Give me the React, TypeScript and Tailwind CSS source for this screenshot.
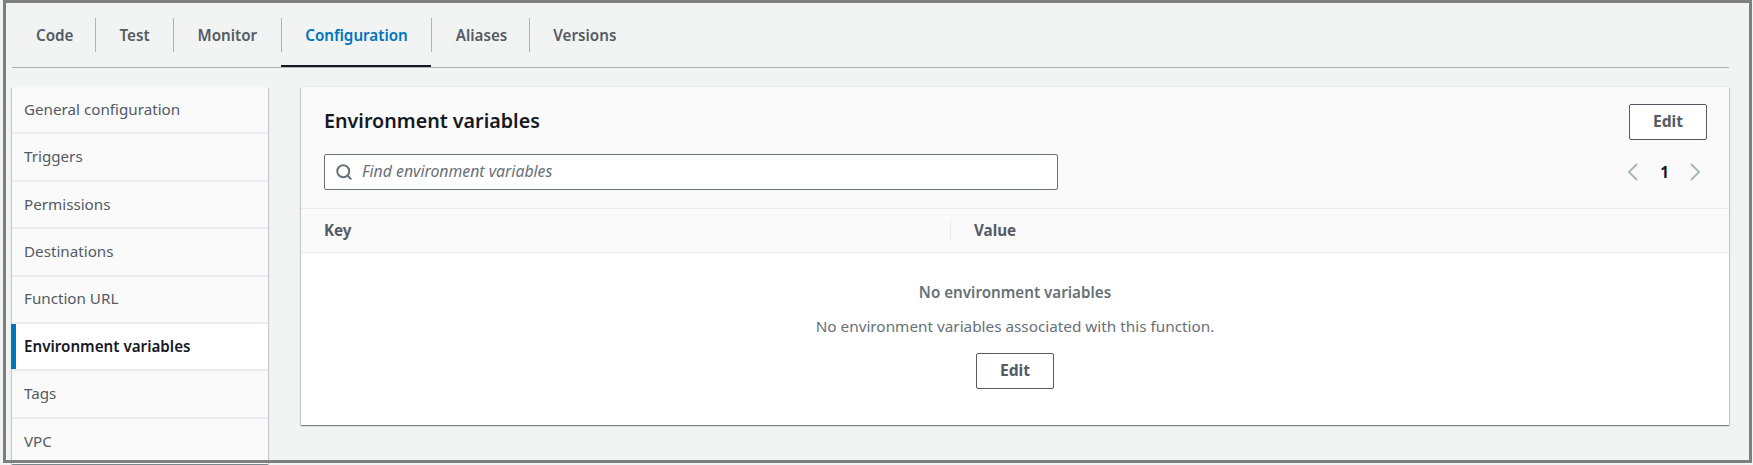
import React from "react";
import { Search } from "lucide-react";

const tabs = ["Code", "Test", "Monitor", "Configuration", "Aliases", "Versions"];
const nav = ["General configuration", "Triggers", "Permissions", "Destinations", "Function URL", "Environment variables", "Tags", "VPC"];

function EditButton() {
  return (
    <button className="w-[78px] h-[36px] bg-white border border-[#545b64] rounded-[2px] text-[#545b64] font-bold text-[15.65px] flex items-center justify-center">
      Edit
    </button>
  );
}

export default function App() {
  return (
    <div className="relative w-[1753px] h-[465px] overflow-hidden bg-[#f2f3f3] font-['Noto_Sans',sans-serif] text-[15.2px] text-[#545b64]">
      <div className="ml-[12px] mr-[24px] flex border-b border-[#aab7b8] h-[68px]">
        {tabs.map((t, i) => {
          const active = t === "Configuration";
          return (
            <div key={t} className={`pt-[18px] h-[67px] border-b-2 ${active ? "border-[#16191f]" : "border-transparent"}`}>
              <div className={`h-[34px] flex items-center font-semibold pt-[1px] ${i > 0 ? "border-l border-[#aab7b8] pl-[23.5px]" : "pl-[24px]"} ${i === 0 ? "pr-[21.5px]" : t === "Aliases" ? "pr-[21.5px]" : "pr-[23.5px]"} ${active ? "text-[#0073bb]" : ""}`}>
                {t}
              </div>
            </div>
          );
        })}
      </div>

      <div className="flex gap-[33px] ml-[12px] mr-[24px] pt-[19px]">
        <div className="w-[256px] shrink-0 flex flex-col gap-[2px] bg-[#eaeded] shadow-[0_1px_1px_0_rgba(0,28,36,0.3),1px_1px_1px_0_rgba(0,28,36,0.15),-1px_1px_1px_0_rgba(0,28,36,0.15)]">
          {nav.map((n) => {
            const active = n === "Environment variables";
            return (
              <div
                key={n}
                className={`h-[45.4px] shrink-0 flex items-center pb-[1px] ${active ? "bg-white font-semibold text-[#16191f] border-l-[5px] border-[#0073bb] pl-[8px] -ml-px" : "bg-[#fafafa] pl-[12px]"}`}
              >
                {n}
              </div>
            );
          })}
        </div>

        <div className="flex-1 h-[338px] flex flex-col bg-white shadow-[0_1px_1px_0_rgba(0,28,36,0.3),1px_1px_1px_0_rgba(0,28,36,0.15),-1px_1px_1px_0_rgba(0,28,36,0.15),0_-1px_1px_0_rgba(0,28,36,0.04)]">
          <div className="bg-[#fafafa] border-b border-[#eaeded] h-[122px] pt-[17px] px-[23px] flex flex-col">
            <div className="flex justify-between items-start h-[50px]">
              <h2 className="font-semibold text-[19.7px] leading-[34px] text-[#16191f]">Environment variables</h2>
              <div className="mr-[-1px]"><EditButton /></div>
            </div>
            <div className="flex justify-between items-center">
              <div className="w-[734px] h-[36px] bg-white border border-[#687078] rounded-[2px] flex items-center pl-[10px] gap-[9px]">
                <Search size={18} strokeWidth={2.6} className="text-[#687078]" />
                <span className="italic text-[#687078] text-[15.8px]">Find environment variables</span>
              </div>
              <div className="flex items-center mr-[5px] gap-[20px]">
                <svg className="mr-[1px]" width="11" height="18" viewBox="0 0 11 18" fill="none" stroke="#aab7b8" strokeWidth="2"><path d="M10 1 L2 9 L10 17" /></svg>
                <span className="font-bold text-[#16191f] w-[11px] text-center">1</span>
                <svg width="11" height="18" viewBox="0 0 11 18" fill="none" stroke="#aab7b8" strokeWidth="2"><path d="M1 1 L9 9 L1 17" /></svg>
              </div>
            </div>
          </div>
          <div className="bg-[#fafafa] border-b border-[#eaeded] h-[44px] flex items-center font-bold">
            <div className="w-[650px] pl-[23px] h-[23px] flex items-center border-r border-[#eaeded]">Key</div>
            <div className="pl-[23px]">Value</div>
          </div>
          <div className="flex-1 flex flex-col items-center pt-[25px] text-[#687078]">
            <div className="font-semibold leading-[28px]">No environment variables</div>
            <div className="mt-[6px] leading-[28px] text-[15.3px]">No environment variables associated with this function.</div>
            <div className="mt-[13px]"><EditButton /></div>
          </div>
        </div>
      </div>

      <div className="absolute left-[3px] top-0 right-[1px] h-[463px] border-[3px] border-[#7f7f7f] pointer-events-none" />
    </div>
  );
}
